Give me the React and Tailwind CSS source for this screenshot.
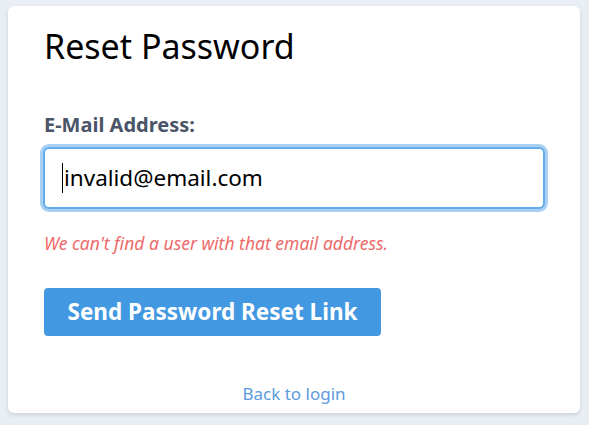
export default function App() {
  return (
    <div
      className="min-h-screen bg-[#e9eef4] pl-2 pr-[9px] pt-[6px]"
      style={{ fontFamily: '"Noto Sans", "Open Sans", sans-serif' }}
    >
      <div className="bg-white rounded-md shadow-[0_2px_4px_rgba(0,0,0,0.12)] h-[407px] px-9 pt-[18px]">
        <h1 className="text-[34px] leading-[44px] text-black">Reset Password</h1>

        <form className="mt-[45px]">
          <label className="block text-[20px] leading-6 font-bold text-[#4a5568]">
            E-Mail Address:
          </label>
          <div className="mt-[10px] -mx-px rounded-md border-2 border-[#63aeea] shadow-[0_0_0_3px_#a8d0f3] bg-white h-[62px] flex items-center pl-[17px]">
            <span className="border-l border-black h-[30px] mr-[1px]" />
            <span className="text-[22.5px] text-black leading-none">invalid@email.com</span>
          </div>
          <p className="mt-[22px] text-[17.5px] leading-6 italic text-[#ee6a6a]">
            We can't find a user with that email address.
          </p>
          <button
            type="button"
            className="mt-[33px] h-12 w-[337px] rounded bg-[#4399e1] text-white text-[22.5px] font-bold"
          >
            Send Password Reset Link
          </button>
        </form>

        <p className="mt-[46px] text-center text-[17px] leading-6 text-[#5c9be0]">Back to login</p>
      </div>
    </div>
  );
}
